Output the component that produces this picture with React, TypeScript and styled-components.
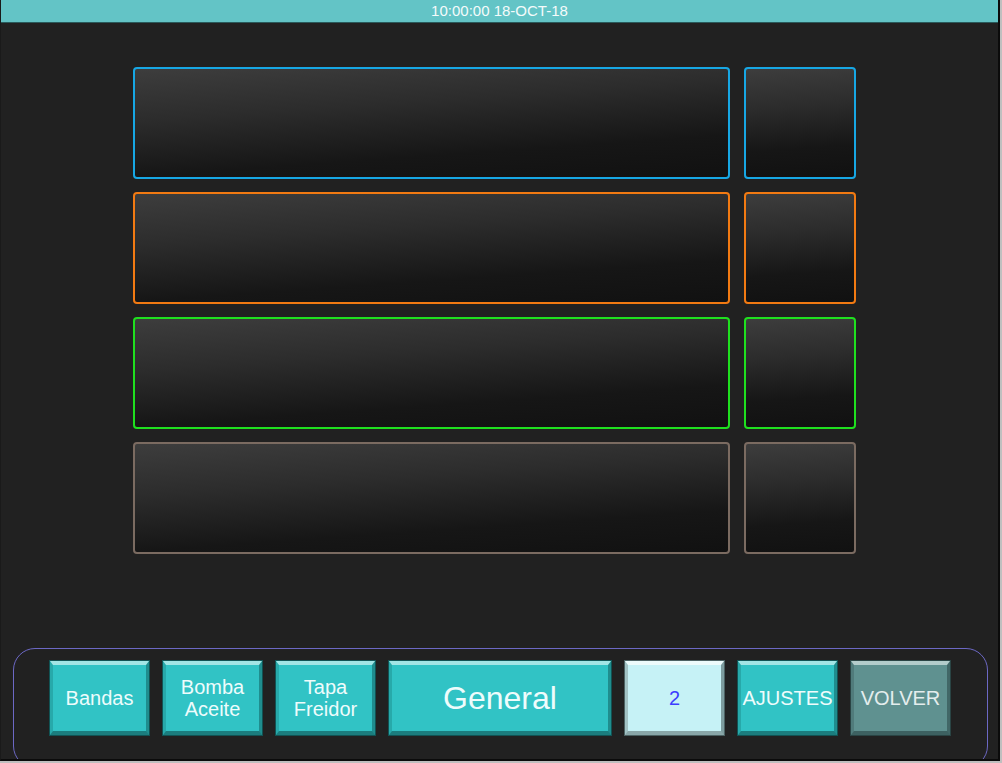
import React from "react";
import styled, { createGlobalStyle, css } from "styled-components";

const Global = createGlobalStyle`
  html, body { margin: 0; padding: 0; background: #bfbfbf; }
  body { font-family: "Liberation Sans", Arial, sans-serif; }
  * { box-sizing: border-box; }
`;

const Screen = styled.div`
  width: 1000px;
  height: 761px;
  background: #212121;
  border-right: 2px solid #0b0b0b;
  border-bottom: 2px solid #0b0b0b;
  border-left: 1px solid #1a1a1a;
  display: flex;
  flex-direction: column;
  overflow: hidden;
`;

const Header = styled.div`
  height: 23px;
  flex: none;
  background: #63c4c6;
  border-bottom: 1px solid #2a5a5b;
  color: #f4fbfb;
  font-size: 15px;
  line-height: 22px;
  text-align: center;
`;

const Main = styled.div`
  padding: 44px 0 0 132px;
  flex: none;
`;

const PanelGrid = styled.div`
  display: grid;
  grid-template-columns: 597px 112px;
  grid-auto-rows: 112px;
  column-gap: 14px;
  row-gap: 13px;
`;

const Panel = styled.div<{ $c: string }>`
  border: 2px solid ${(p) => p.$c};
  border-radius: 4px;
  background: linear-gradient(176deg, #3d3d3d 0%, #2c2c2c 35%, #161616 72%, #111111 100%);
`;

const BottomBar = styled.div`
  flex: none;
  margin: 94px 0 0 12px;
  width: 975px;
  height: 120px;
  border: 1px solid #6c68c4;
  border-radius: 22px;
  padding: 12px 0 0 36px;
  display: flex;
  gap: 14px;
  align-items: flex-start;
`;

type Variant = "teal" | "light" | "gray";

const variants: Record<Variant, ReturnType<typeof css>> = {
  teal: css`
    background: #31c3c5;
    border-top-color: #a2e5e5;
    border-left-color: #27a9aa;
    border-right-color: #1f8d8e;
    border-bottom-color: #1b7d7e;
    box-shadow: 0 0 0 1px #115354;
    color: #eefcfc;
  `,
  light: css`
    background: #c6f2f6;
    border-top-color: #ecfbfb;
    border-left-color: #a2c3c5;
    border-right-color: #7d9c9e;
    border-bottom-color: #8aa7a9;
    box-shadow: 0 0 0 1px #4c6263;
    color: #3d3dff;
  `,
  gray: css`
    background: #5f9190;
    border-top-color: #b3cccb;
    border-left-color: #507b7b;
    border-right-color: #416767;
    border-bottom-color: #3d6161;
    box-shadow: 0 0 0 1px #2a4444;
    color: #e4eded;
  `,
};

const Button = styled.div<{ $v: Variant; $w?: number; $big?: boolean }>`
  width: ${(p) => p.$w ?? 99}px;
  height: 74px;
  flex: none;
  border-style: solid;
  border-width: 4px 3px 4px 3px;
  display: flex;
  align-items: center;
  justify-content: center;
  text-align: center;
  font-size: ${(p) => (p.$big ? 32 : 20)}px;
  line-height: 22px;
  white-space: pre-line;
  ${(p) => variants[p.$v]}
`;

const panelColors = ["#17a7e4", "#f27a12", "#1fe01f", "#7b6b61"];

export default function App() {
  return (
    <>
      <Global />
      <Screen>
        <Header>10:00:00 18-OCT-18</Header>
        <Main>
          <PanelGrid>
            {panelColors.map((c) => (
              <React.Fragment key={c}>
                <Panel $c={c} />
                <Panel $c={c} />
              </React.Fragment>
            ))}
          </PanelGrid>
        </Main>
        <BottomBar>
          <Button $v="teal">Bandas</Button>
          <Button $v="teal">{"Bomba\nAceite"}</Button>
          <Button $v="teal">{"Tapa\nFreidor"}</Button>
          <Button $v="teal" $w={222} $big>
            General
          </Button>
          <Button $v="light">2</Button>
          <Button $v="teal">AJUSTES</Button>
          <Button $v="gray">VOLVER</Button>
        </BottomBar>
      </Screen>
    </>
  );
}
